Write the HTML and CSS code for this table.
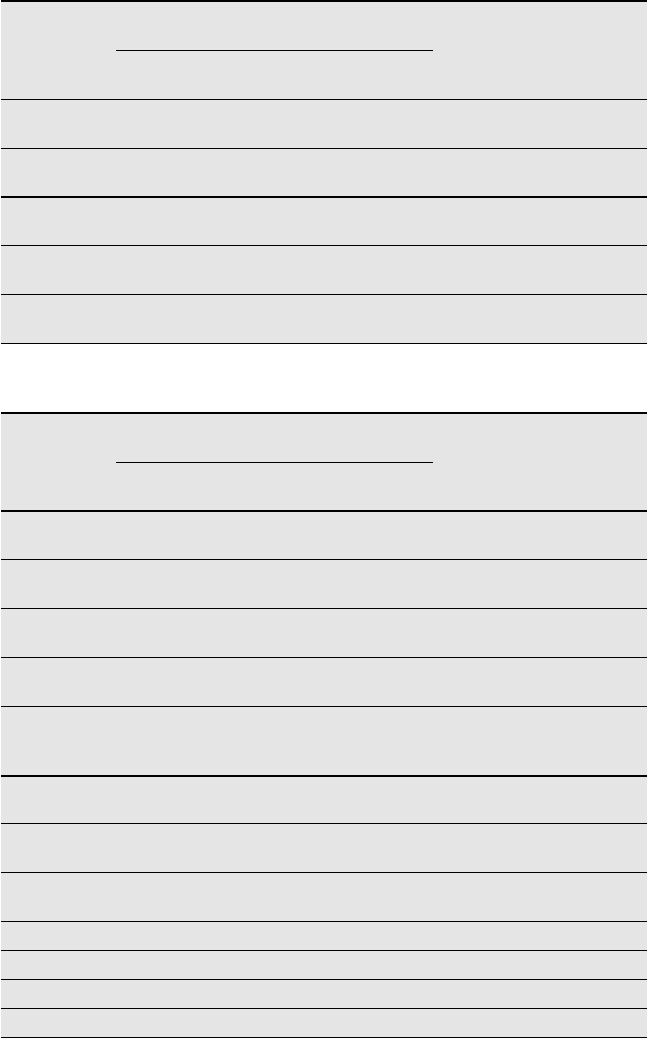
FILE: index.html
```html
<!DOCTYPE html>
<html lang="en">
<head>
  <meta charset="UTF-8">
  <title>Tables</title>
  <meta name="viewport" content="width=device-width, initial-scale=1">
  <link rel="stylesheet" href="styles.css">
</head>
<body>

  <div class="grid-table">
    <div class="head-top"></div>
    <div class="cmidrule"></div>
    <div class="row"></div>
    <div class="row"></div>
    <div class="row thick"></div>
    <div class="row h48"></div>
    <div class="row"></div>
    <div class="row"></div>
  </div>

  <div class="grid-table second">
    <div class="head-top"></div>
    <div class="cmidrule"></div>
    <div class="row thick"></div>
    <div class="row h48"></div>
    <div class="row"></div>
    <div class="row"></div>
    <div class="row"></div>
    <div class="row thick tall"></div>
    <div class="row h47"></div>
    <div class="row"></div>
    <div class="row"></div>
    <div class="row small"></div>
    <div class="row small"></div>
    <div class="row small"></div>
    <div class="row small"></div>
  </div>

</body>
</html>
```

FILE: styles.css
```css
* { margin: 0; padding: 0; box-sizing: border-box; font-family: 'Liberation Serif', serif; }
body {
  background: #fff;
  width: 648px;
}
.grid-table {
  margin-left: 1px;
  width: 646px;
  background: #e5e5e5;
  border-top: 2px solid #000;
  display: flex;
  flex-direction: column;
}
.grid-table.second { margin-top: 68px; }
.head-top { height: 48px; }
.cmidrule {
  height: 1px;
  width: 317px;
  margin-left: 115px;
  background: #000;
}
.row {
  height: 49px;
  border-bottom: 1px solid #000;
}
.row.thick { border-bottom-width: 2px; }
.row.h48 { height: 48px; }
.row.h47 { height: 47px; }
.row.tall { height: 70px; }
.row.small { height: 29px; }
```
